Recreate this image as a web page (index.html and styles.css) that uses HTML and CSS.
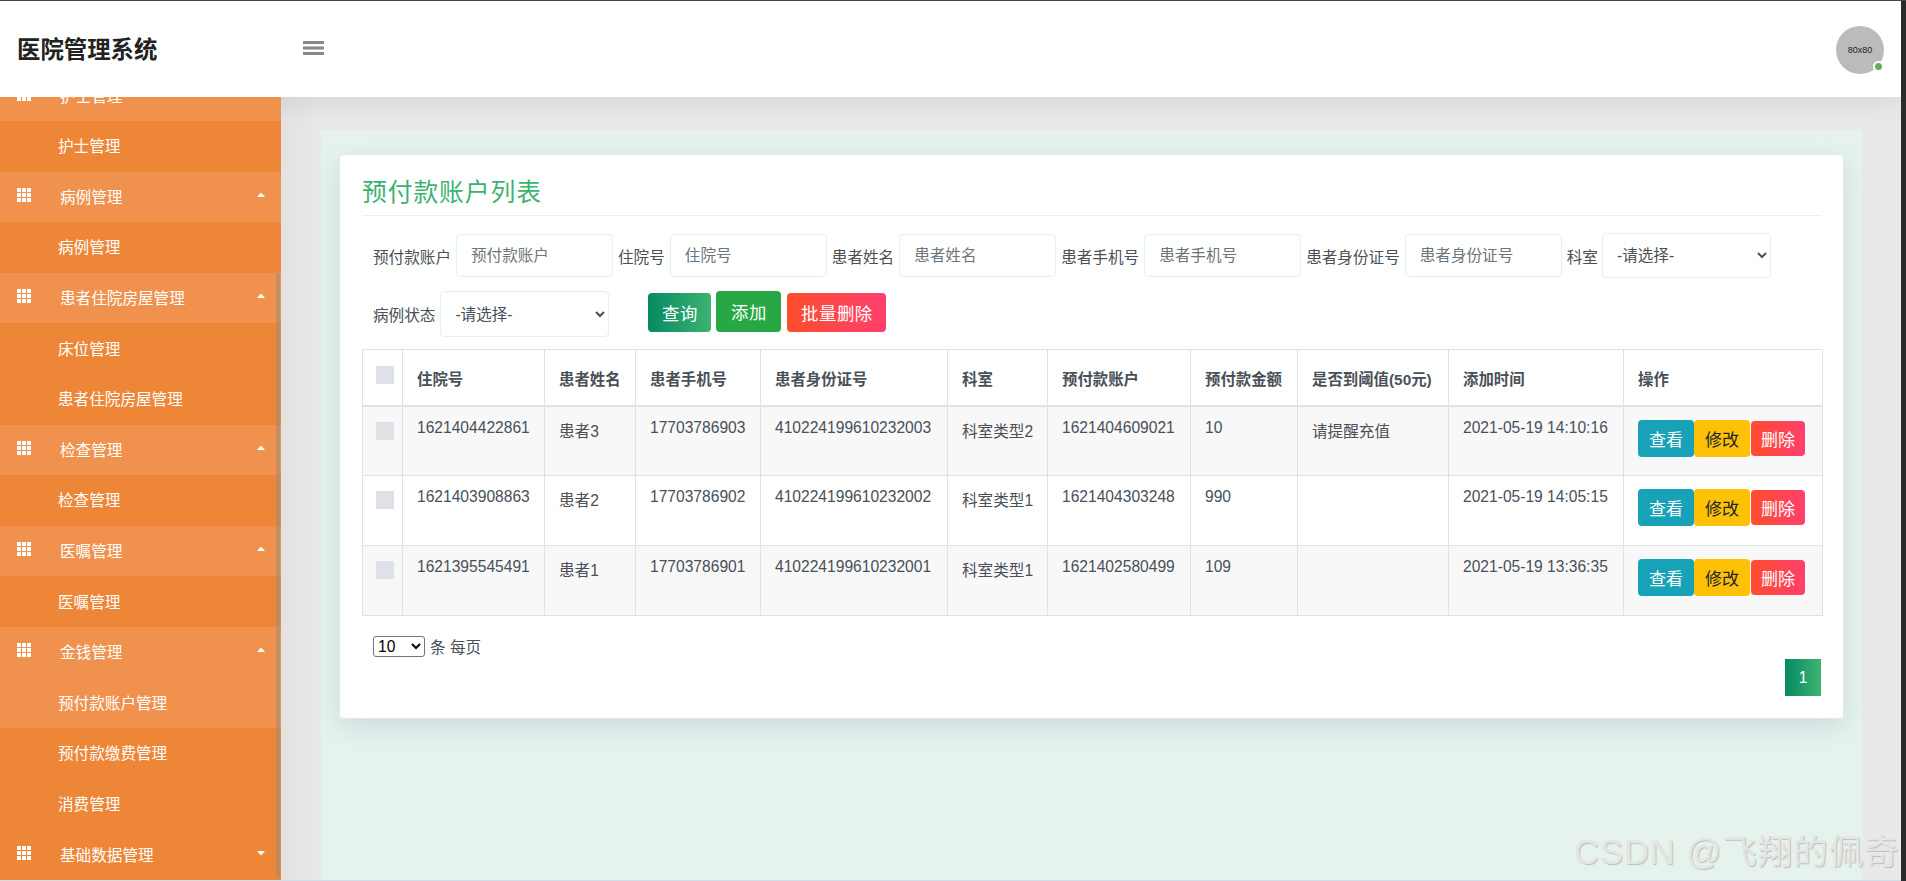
FILE: index.html
```html
<!DOCTYPE html>
<html lang="zh">
<head>
  <meta charset="UTF-8">
  <title>医院管理系统</title>
  <link rel="stylesheet" href="styles.css">
</head>
<body>
  <svg class="defs" width="0" height="0">
    <symbol id="i-grid" viewBox="0 0 14 14">
      <path fill="#fff" d="M0 0h4v4H0zM5 0h4v4H5zM10 0h4v4h-4zM0 5h4v4H0zM5 5h4v4H5zM10 5h4v4h-4zM0 10h4v4H0zM5 10h4v4H5zM10 10h4v4h-4z"/>
    </symbol>
    <symbol id="i-up" viewBox="0 0 8 4">
      <path fill="#fff" d="M0 4 3.2.3Q4-.2 4.8.3L8 4z"/>
    </symbol>
    <symbol id="i-down" viewBox="0 0 8 4">
      <path fill="#fff" d="M0 0 3.2 3.7Q4 4.2 4.8 3.7L8 0z"/>
    </symbol>
  </svg>

  <div id="app">
    <header class="topbar">
      <div class="logo">医院管理系统</div>
      <svg class="burger" width="21" height="14" viewBox="0 0 21 14">
        <path fill="#888" d="M0 0h21v3H0zM0 5.5h21v3H0zM0 11h21v3H0z"/>
      </svg>
      <div class="avatar">80x80<span class="avatar-dot"></span></div>
    </header>

    <div class="body-row">
      <aside class="sidebar">
        <ul class="menu">
          <li class="menu-parent"><svg class="menu-icon"><use href="#i-grid"/></svg><span>护士管理</span></li>
          <li class="menu-sub">护士管理</li>
          <li class="menu-parent"><svg class="menu-icon"><use href="#i-grid"/></svg><span>病例管理</span><svg class="menu-caret"><use href="#i-up"/></svg></li>
          <li class="menu-sub">病例管理</li>
          <li class="menu-parent"><svg class="menu-icon"><use href="#i-grid"/></svg><span>患者住院房屋管理</span><svg class="menu-caret"><use href="#i-up"/></svg></li>
          <li class="menu-sub">床位管理</li>
          <li class="menu-sub">患者住院房屋管理</li>
          <li class="menu-parent"><svg class="menu-icon"><use href="#i-grid"/></svg><span>检查管理</span><svg class="menu-caret"><use href="#i-up"/></svg></li>
          <li class="menu-sub">检查管理</li>
          <li class="menu-parent"><svg class="menu-icon"><use href="#i-grid"/></svg><span>医嘱管理</span><svg class="menu-caret"><use href="#i-up"/></svg></li>
          <li class="menu-sub">医嘱管理</li>
          <li class="menu-parent"><svg class="menu-icon"><use href="#i-grid"/></svg><span>金钱管理</span><svg class="menu-caret"><use href="#i-up"/></svg></li>
          <li class="menu-sub active">预付款账户管理</li>
          <li class="menu-sub">预付款缴费管理</li>
          <li class="menu-sub">消费管理</li>
          <li class="menu-flat"><svg class="menu-icon"><use href="#i-grid"/></svg><span>基础数据管理</span><svg class="menu-caret"><use href="#i-down"/></svg></li>
        </ul>
        <div class="side-thumb"></div>
      </aside>

      <main class="content">
        <div class="panel">
          <section class="card">
            <h2 class="card-title">预付款账户列表</h2>

            <form class="search">
              <div class="search-row">
                <label>预付款账户</label><input class="ipt" placeholder="预付款账户">
                <label>住院号</label><input class="ipt" placeholder="住院号">
                <label>患者姓名</label><input class="ipt" placeholder="患者姓名">
                <label>患者手机号</label><input class="ipt" placeholder="患者手机号">
                <label>患者身份证号</label><input class="ipt" placeholder="患者身份证号">
                <label class="label-tight">科室</label><select class="sel sel-wide"><option>-请选择-</option></select>
              </div>
              <div class="search-row">
                <label>病例状态</label><select class="sel"><option>-请选择-</option></select>
                <div class="search-btns">
                  <button type="button" class="btn btn-query">查询</button>
                  <button type="button" class="btn btn-add">添加</button>
                  <button type="button" class="btn btn-batch">批量删除</button>
                </div>
              </div>
            </form>

            <table class="tbl">
              <colgroup>
                <col class="c1"><col class="c2"><col class="c3"><col class="c4"><col class="c5"><col class="c6"><col class="c7"><col class="c8"><col class="c9"><col class="c10"><col class="c11">
              </colgroup>
              <thead>
                <tr>
                  <th><span class="chk chk-head"></span></th>
                  <th>住院号</th>
                  <th>患者姓名</th>
                  <th>患者手机号</th>
                  <th>患者身份证号</th>
                  <th>科室</th>
                  <th>预付款账户</th>
                  <th>预付款金额</th>
                  <th>是否到阈值(50元)</th>
                  <th>添加时间</th>
                  <th>操作</th>
                </tr>
              </thead>
              <tbody>
                <tr>
                  <td><span class="chk"></span></td>
                  <td>1621404422861</td>
                  <td class="cn">患者3</td>
                  <td>17703786903</td>
                  <td>410224199610232003</td>
                  <td class="cn">科室类型2</td>
                  <td>1621404609021</td>
                  <td>10</td>
                  <td class="cn">请提醒充值</td>
                  <td>2021-05-19 14:10:16</td>
                  <td class="ops"><div class="ops-box"><button class="op op-view">查看</button><button class="op op-edit">修改</button><button class="op op-del">删除</button></div></td>
                </tr>
                <tr>
                  <td><span class="chk"></span></td>
                  <td>1621403908863</td>
                  <td class="cn">患者2</td>
                  <td>17703786902</td>
                  <td>410224199610232002</td>
                  <td class="cn">科室类型1</td>
                  <td>1621404303248</td>
                  <td>990</td>
                  <td class="cn"></td>
                  <td>2021-05-19 14:05:15</td>
                  <td class="ops"><div class="ops-box"><button class="op op-view">查看</button><button class="op op-edit">修改</button><button class="op op-del">删除</button></div></td>
                </tr>
                <tr>
                  <td><span class="chk"></span></td>
                  <td>1621395545491</td>
                  <td class="cn">患者1</td>
                  <td>17703786901</td>
                  <td>410224199610232001</td>
                  <td class="cn">科室类型1</td>
                  <td>1621402580499</td>
                  <td>109</td>
                  <td class="cn"></td>
                  <td>2021-05-19 13:36:35</td>
                  <td class="ops"><div class="ops-box"><button class="op op-view">查看</button><button class="op op-edit">修改</button><button class="op op-del">删除</button></div></td>
                </tr>
              </tbody>
            </table>

            <div class="per-page">
              <select class="per-sel"><option>10</option></select>
              <span>条 每页</span>
            </div>
            <div class="pager"><a class="pager-item">1</a></div>
          </section>
        </div>
      </main>
    </div>

    <div class="watermark">CSDN @飞翔的佩奇</div>
  </div>
</body>
</html>
```

FILE: styles.css
```css
* {margin:0; padding:0; box-sizing: border-box;}
ul{list-style-type: none;}

html, body {
  width: 100%;
  height: 100%;
  overflow: hidden;
}
body {
  background-color: #2b2b2b;
  border-top: 1px solid #444;
  font-family: "Liberation Sans", "Noto Sans CJK SC", sans-serif;
  font-size: 15.6px;
  color: #495057;
}
.defs {position: absolute;}

#app {
  position: relative;
  width: 1901px;
  height: 879px;
  overflow: hidden;
  display: flex;
  flex-direction: column;
  background-color: #e6e6e6;
  box-shadow: 0 1px 0 #cfe0ea;
}

/* top bar */
.topbar {
  position: relative;
  z-index: 1;
  flex: none;
  height: 96px;
  display: flex;
  align-items: center;
  background-color: #fff;
  box-shadow: 0 2px 30px rgba(0,0,0,.1);
}
.logo {
  width: 281px;
  padding-left: 17px;
  margin-top: -2px;
  font-size: 23.4px;
  font-weight: bold;
  color: #222;
}
.burger {
  margin-left: 22px;
  margin-top: -2px;
}
.avatar {
  position: relative;
  width: 48px;
  height: 48px;
  margin-left: auto;
  margin-right: 17px;
  margin-top: 2px;
  border-radius: 50%;
  background-color: #bbb;
  color: #222;
  font-size: 9px;
  line-height: 48px;
  text-align: center;
}
.avatar-dot {
  position: absolute;
  right: 0;
  bottom: 2px;
  width: 11px;
  height: 11px;
  border: 2px solid #fff;
  border-radius: 50%;
  background-color: #66ad5f;
}

.body-row {
  flex: 1;
  min-height: 0;
  display: flex;
}

/* side menu */
.sidebar {
  position: relative;
  z-index: 2;
  flex: none;
  width: 281px;
  overflow: hidden;
  background-color: #ee8638;
}
.menu {
  margin-top: -26.6px;
  color: #fff;
}
.menu li {
  height: 50.6px;
  padding-bottom: 2px;
  display: flex;
  align-items: center;
  white-space: nowrap;
}
.menu-parent, .menu-flat {
  padding-left: 60px;
}
.menu-parent {background-color: #f0924e;}
.menu-sub {padding-left: 58px;}
.menu-sub.active {background-color: #f0924e;}
.menu-icon {
  position: absolute;
  left: 17px;
  width: 14px;
  height: 14px;
  margin-top: -2px;
}
.menu-caret {
  position: absolute;
  left: 257px;
  width: 8px;
  height: 4px;
  margin-top: -2px;
}
.side-thumb {
  position: absolute;
  top: 176px;
  right: 1px;
  width: 4px;
  height: 605px;
  background-color: rgba(150,140,130,.55);
}

/* content */
.content {
  flex: 1;
  min-width: 0;
  display: flex;
  padding: 33px 39px 0 40px;
  background: linear-gradient(90deg, #e2e2e2, #e9e9e9 40px);
}
.panel {
  flex: 1;
  min-width: 0;
  padding: 24px 18px 0;
  background-color: #e5f3ec;
}
.card {
  padding: 20px 21px 22px 22px;
  border: 1px solid #e1e8ef;
  border-radius: 4px;
  background-color: #fff;
  box-shadow: 0 8px 24px rgba(110,130,170,.2);
}
.card-title {
  height: 41px;
  padding-bottom: 5px;
  border-bottom: 1px solid #e9eef0;
  font-size: 24.8px;
  font-weight: normal;
  line-height: 36px;
  letter-spacing: .9px;
  color: #3cb371;
}

/* search form */
.search {
  margin-top: 17px;
  padding-left: 11px;
}
.search-row {
  display: flex;
  align-items: center;
  height: 45px;
  margin-bottom: 13px;
  white-space: nowrap;
}
.search-row:last-child {
  height: 46px;
  margin-bottom: 0;
}
.search-row label {
  margin-right: 5px;
}
.search-row .label-tight {margin-right: 4px;}
.ipt {
  width: 157px;
  height: 43px;
  margin-right: 5px;
  padding: 0 14px;
  border: 1px solid #e6f0f0;
  border-radius: 4px;
  background-color: #fff;
  font: inherit;
  color: #495057;
  outline: none;
}
.ipt::placeholder {color: #6c757d;}
.sel {
  width: 169px;
  height: 46px;
  padding: 0 10px;
  border: 1px solid #e6f0f0;
  border-radius: 4px;
  background-color: #fff;
  font: inherit;
  color: #495057;
}
.sel-wide {height: 45px;}
.search-btns {
  display: flex;
  align-items: center;
  gap: 5px;
  align-self: flex-start;
  margin-left: 39px;
}
.btn {
  height: 39px;
  margin-top: 1px;
  border: 0;
  border-radius: 4px;
  font-family: inherit;
  font-size: 17.4px;
  letter-spacing: .5px;
  color: #fff;
}
.btn-query {
  width: 63px;
  background: linear-gradient(90deg, #068a63, #3cb371);
}
.btn-add {
  width: 65px;
  height: 41px;
  margin-top: 0;
  background-color: #28a745;
}
.btn-batch {
  width: 99px;
  margin-left: 1px;
  background: linear-gradient(90deg, #ff4d2d, #ff3f6e);
}

/* table */
.tbl {
  width: 1460px;
  margin-top: 12px;
  border-collapse: collapse;
  table-layout: fixed;
}
.c1 {width: 40px;}
.c2 {width: 142px;}
.c3 {width: 91px;}
.c4 {width: 125px;}
.c5 {width: 187px;}
.c6 {width: 100px;}
.c7 {width: 143px;}
.c8 {width: 107px;}
.c9 {width: 151px;}
.c10 {width: 175px;}
.c11 {width: 199px;}
.tbl th, .tbl td {
  border: 1px solid #dee2e6;
  padding: 9px 14px 0;
  vertical-align: top;
  text-align: left;
  white-space: nowrap;
  line-height: 24px;
}
.tbl th {
  height: 56px;
  padding-top: 18px;
  border-bottom-width: 2px;
  font-weight: bold;
  font-size: 15.4px;
}
.tbl td {height: 70px;}
.tbl tbody tr:nth-child(odd) {background-color: #f8f8f9;}
.tbl td.cn {padding-top: 13px;}
.tbl th:first-child, .tbl td:first-child {padding-left: 13px; padding-right: 0;}
.tbl td:first-child {padding-top: 15px;}
.tbl th:first-child {padding-top: 16px;}
.chk {
  display: block;
  width: 18px;
  height: 18px;
  background-color: #dee1e6;
}
.tbl td.ops {padding: 13px 0 0 14px;}
.ops-box {
  display: flex;
  align-items: center;
}
.op {
  width: 56px;
  height: 37px;
  border: 0;
  border-radius: 4px;
  font-family: inherit;
  font-size: 17px;
  color: #fff;
}
.op-view {background-color: #17a2b8;}
.op-edit {background-color: #ffc107; color: #212529;}
.op-del {
  width: 54px;
  height: 35px;
  margin-left: 1px;
  background: linear-gradient(90deg, #ff4d2d, #ff3f6e);
}

/* page size + pager */
.per-page {
  display: flex;
  align-items: center;
  gap: 5px;
  margin-top: 19px;
  padding-left: 11px;
}
.per-sel {
  width: 52px;
  height: 21px;
  border: 1px solid #767676;
  border-radius: 3px;
  background-color: #fff;
  font: inherit;
  color: #000;
}
.pager {
  display: flex;
  justify-content: flex-end;
  margin-top: 2px;
  padding-right: 1px;
}
.pager-item {
  display: block;
  width: 36px;
  height: 37px;
  background: linear-gradient(90deg, #068a63, #3cb371);
  color: #fff;
  font-size: 15.6px;
  line-height: 37px;
  text-align: center;
}

.watermark {
  position: absolute;
  left: 1574px;
  top: 823px;
  z-index: 3;
  font-size: 34.5px;
  letter-spacing: 1px;
  white-space: nowrap;
  color: #e4e6e6;
  text-shadow: 1px 1px 1px #bdbdbd;
}
```
